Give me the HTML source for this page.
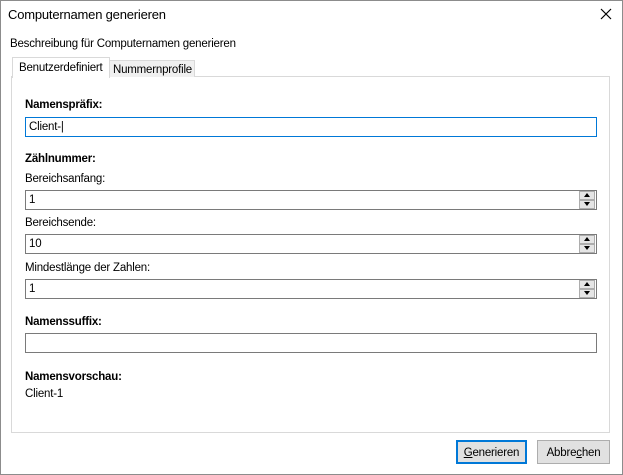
<!DOCTYPE html><html><head><style>
body{margin:0;width:623px;height:475px;overflow:hidden;font-family:"Liberation Sans",sans-serif;font-size:11.5px;letter-spacing:-0.2px;color:#000;background:#fff}
.win{position:absolute;left:0;top:0;width:621px;height:473px;border:1px solid #8c8c8c;background:#fff}
.a{position:absolute;white-space:nowrap}
.t{margin-top:1px}
.b{font-weight:bold}
.in{position:absolute;left:24px;width:570px;height:18px;border:1px solid #7a7a7a;background:#fff;box-sizing:content-box}
.in span{position:absolute;left:3px;top:3px}
.sp{position:absolute;right:1px;width:14px;height:7px;border:1px solid #adadad;background:#e5e5e5}
.sp svg{position:absolute;left:4px;top:1px}
.btn{position:absolute;top:439px;height:22px;border:1px solid #adadad;background:#e1e1e1;text-align:center;line-height:24px}
</style></head><body><div class="win">
<div class="a t" style="left:7px;top:5px;font-size:13px">Computernamen generieren</div>
<svg class="a" style="left:599px;top:7px" width="12" height="12"><path d="M1 1L11 11M11 1L1 11" stroke="#000" stroke-width="1.2"/></svg>
<div class="a t" style="left:9px;top:36px">Beschreibung für Computernamen generieren</div>
<div class="a" style="left:10px;top:75px;width:597px;height:355px;border:1px solid #d9d9d9;background:#fff"></div>
<div class="a" style="left:108px;top:59px;width:84px;height:16px;border:1px solid #d9d9d9;border-bottom:none;background:#f0f0f0"><span style="position:absolute;left:3px;top:3px">Nummernprofile</span></div>
<div class="a" style="left:11px;top:56px;width:96px;height:20px;border:1px solid #d9d9d9;border-bottom:none;background:#fff"><span style="position:absolute;left:6px;top:4px">Benutzerdefiniert</span></div>
<div class="a b t" style="left:24px;top:97px">Namenspräfix:</div>
<div class="in" style="top:116px;border-color:#0078d7"><span>Client-|</span></div>
<div class="a b t" style="left:24px;top:151px">Zählnummer:</div>
<div class="a t" style="left:24px;top:171px">Bereichsanfang:</div>
<div class="in" style="top:189px"><span>1</span><div class="sp" style="top:0"><svg width="6" height="4"><path d="M0 4L3 0L6 4Z"/></svg></div><div class="sp" style="top:9px"><svg width="6" height="4"><path d="M0 0L6 0L3 4Z"/></svg></div></div>
<div class="a t" style="left:24px;top:215px">Bereichsende:</div>
<div class="in" style="top:233px"><span>10</span><div class="sp" style="top:0"><svg width="6" height="4"><path d="M0 4L3 0L6 4Z"/></svg></div><div class="sp" style="top:9px"><svg width="6" height="4"><path d="M0 0L6 0L3 4Z"/></svg></div></div>
<div class="a t" style="left:24px;top:260px">Mindestlänge der Zahlen:</div>
<div class="in" style="top:278px"><span>1</span><div class="sp" style="top:0"><svg width="6" height="4"><path d="M0 4L3 0L6 4Z"/></svg></div><div class="sp" style="top:9px"><svg width="6" height="4"><path d="M0 0L6 0L3 4Z"/></svg></div></div>
<div class="a b t" style="left:24px;top:314px">Namenssuffix:</div>
<div class="in" style="top:332px"></div>
<div class="a b t" style="left:24px;top:369px">Namensvorschau:</div>
<div class="a t" style="left:24px;top:386px">Client-1</div>
<div class="btn" style="left:455px;width:67px;border:2px solid #0078d7;height:20px;line-height:22px"><u>G</u>enerieren</div>
<div class="btn" style="left:536px;width:71px">Abbre<u>c</u>hen</div>
</div></body></html>
